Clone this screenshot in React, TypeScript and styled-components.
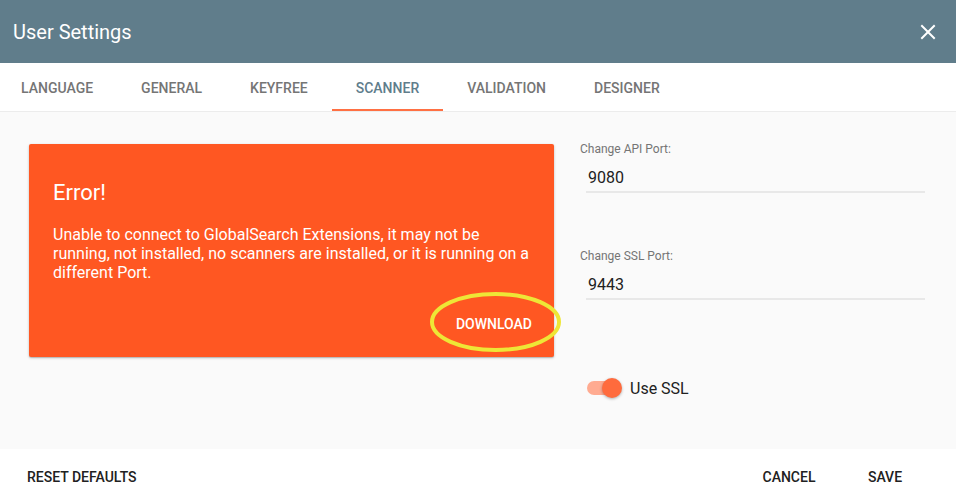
import React, { useState } from "react";
import styled, { createGlobalStyle } from "styled-components";

const GlobalStyle = createGlobalStyle`
  html, body {
    margin: 0;
    padding: 0;
    background: #ffffff;
  }
  body {
    font-family: Roboto, "Noto Sans", "Liberation Sans", sans-serif;
    -webkit-font-smoothing: antialiased;
  }
  * { box-sizing: border-box; }
`;

const Dialog = styled.div`
  width: 956px;
  height: 501px;
  display: flex;
  flex-direction: column;
  background: #ffffff;
  overflow: hidden;
`;

const Header = styled.header`
  height: 63px;
  flex: none;
  display: flex;
  align-items: center;
  justify-content: space-between;
  padding: 0 16px 0 13px;
  background: #607d8b;
  color: #ffffff;
`;

const Title = styled.h1`
  margin: 0;
  font-size: 20px;
  font-weight: 400;
  line-height: 24px;
`;

const CloseButton = styled.button`
  width: 24px;
  height: 24px;
  padding: 0;
  border: 0;
  background: transparent;
  display: flex;
  align-items: center;
  justify-content: center;
  cursor: pointer;
`;

const TabBar = styled.nav`
  height: 49px;
  flex: none;
  display: flex;
  border-bottom: 1px solid #ececec;
  background: #ffffff;
  margin-left: -3px;
`;

const Tab = styled.button<{ $active?: boolean }>`
  position: relative;
  height: 48px;
  padding: 2px 24px 0;
  border: 0;
  background: transparent;
  font-family: inherit;
  font-size: 14px;
  font-weight: 500;
  text-transform: uppercase;
  color: ${(p) => (p.$active ? "#607d8b" : "#757575")};
  cursor: pointer;

  &::after {
    content: "";
    position: absolute;
    left: 0;
    right: 0;
    bottom: 0;
    height: 2px;
    background: ${(p) => (p.$active ? "#ff7043" : "transparent")};
  }
`;

const Body = styled.main`
  flex: 1;
  display: flex;
  align-items: flex-start;
  background: #fafafa;
  padding: 32px 0 0 29px;
  gap: 26px;
`;

const ErrorCard = styled.section`
  position: relative;
  width: 525px;
  flex: none;
  display: flex;
  flex-direction: column;
  padding: 36px 24px 15px 24px;
  background: #ff5722;
  color: #ffffff;
  border-radius: 2px;
  box-shadow: 0 1px 3px rgba(0, 0, 0, 0.2), 0 1px 1px rgba(0, 0, 0, 0.14);
`;

const ErrorTitle = styled.h2`
  margin: 0 0 19px 0;
  font-size: 22px;
  font-weight: 400;
  line-height: 26px;
`;

const ErrorText = styled.p`
  margin: 0;
  font-size: 16px;
  line-height: 19px;
  font-weight: 400;
`;

const CardActions = styled.div`
  display: flex;
  justify-content: flex-end;
  margin-top: 24px;
`;

const CardButton = styled.button`
  position: relative;
  height: 36px;
  padding: 0;
  margin-right: -2px;
  border: 0;
  background: transparent;
  color: #ffffff;
  font-family: inherit;
  font-size: 14px;
  font-weight: 500;
  text-transform: uppercase;
  cursor: pointer;
`;

/* yellow ring drawn around the download action */
const Highlight = styled.svg`
  position: absolute;
  left: -26px;
  top: -14px;
  width: 131px;
  height: 60px;
  pointer-events: none;
  overflow: visible;
`;

const Settings = styled.div`
  width: 345px;
  display: flex;
  flex-direction: column;
  margin-top: -3px;
`;

const Field = styled.label`
  display: flex;
  flex-direction: column;
  margin-bottom: 55px;
`;

const FieldLabel = styled.span`
  font-size: 12px;
  line-height: 16px;
  color: #757575;
`;

const FieldInput = styled.input`
  margin: 8px 0 0 6px;
  padding: 0 0 2px 2px;
  height: 28px;
  border: 0;
  border-bottom: 2px solid #e8e8e8;
  background: transparent;
  font-family: inherit;
  font-size: 16px;
  line-height: 24px;
  color: #212121;
  outline: none;
`;

const SwitchRow = styled.label`
  display: flex;
  align-items: center;
  gap: 8px;
  margin: 21px 0 0 7px;
  font-size: 16px;
  color: #212121;
  cursor: pointer;
`;

const Switch = styled.span<{ $on: boolean }>`
  position: relative;
  width: 35px;
  height: 24px;
  display: inline-flex;
  align-items: center;

  &::before {
    content: "";
    width: 34px;
    height: 14px;
    border-radius: 7px;
    background: ${(p) => (p.$on ? "#ffab91" : "#bdbdbd")};
  }

  &::after {
    content: "";
    position: absolute;
    top: 2px;
    left: ${(p) => (p.$on ? "15px" : "0")};
    width: 20px;
    height: 20px;
    border-radius: 50%;
    background: ${(p) => (p.$on ? "#ff6b3d" : "#f5f5f5")};
    box-shadow: 0 1px 3px rgba(0, 0, 0, 0.3);
  }
`;

const Footer = styled.footer`
  height: 52px;
  flex: none;
  display: flex;
  align-items: center;
  padding: 4px 27px 0 11px;
  background: #ffffff;
`;

const Spacer = styled.div`
  flex: 1;
`;

const FooterButton = styled.button`
  min-width: 88px;
  height: 36px;
  padding: 0 16px;
  margin-left: 8px;
  border: 0;
  background: transparent;
  font-family: inherit;
  font-size: 14px;
  font-weight: 500;
  text-transform: uppercase;
  color: #212121;
  cursor: pointer;

  &:first-child {
    margin-left: 0;
  }
`;

const tabs = ["Language", "General", "KeyFree", "Scanner", "Validation", "Designer"];

export default function App() {
  const [active, setActive] = useState("Scanner");
  const [ssl, setSsl] = useState(true);

  return (
    <>
      <GlobalStyle />
      <Dialog>
        <Header>
          <Title>User Settings</Title>
          <CloseButton aria-label="Close">
            <svg width="16" height="16" viewBox="0 0 16 16">
              <path d="M2 2 L14 14 M14 2 L2 14" stroke="#ffffff" strokeWidth="2" strokeLinecap="square" />
            </svg>
          </CloseButton>
        </Header>

        <TabBar>
          {tabs.map((t) => (
            <Tab key={t} $active={t === active} onClick={() => setActive(t)}>
              {t}
            </Tab>
          ))}
        </TabBar>

        <Body>
          <ErrorCard>
            <ErrorTitle>Error!</ErrorTitle>
            <ErrorText>
              Unable to connect to GlobalSearch Extensions, it may not be running, not installed, no
              scanners are installed, or it is running on a different Port.
            </ErrorText>
            <CardActions>
              <CardButton>
                Download
                <Highlight viewBox="0 0 131 60">
                  <ellipse cx="65.5" cy="30" rx="63.5" ry="28" fill="none" stroke="#eee636" strokeWidth="4" />
                </Highlight>
              </CardButton>
            </CardActions>
          </ErrorCard>

          <Settings>
            <Field>
              <FieldLabel>Change API Port:</FieldLabel>
              <FieldInput defaultValue="9080" />
            </Field>
            <Field>
              <FieldLabel>Change SSL Port:</FieldLabel>
              <FieldInput defaultValue="9443" />
            </Field>
            <SwitchRow onClick={() => setSsl(!ssl)}>
              <Switch $on={ssl} />
              Use SSL
            </SwitchRow>
          </Settings>
        </Body>

        <Footer>
          <FooterButton>Reset Defaults</FooterButton>
          <Spacer />
          <FooterButton>Cancel</FooterButton>
          <FooterButton>Save</FooterButton>
        </Footer>
      </Dialog>
    </>
  );
}
